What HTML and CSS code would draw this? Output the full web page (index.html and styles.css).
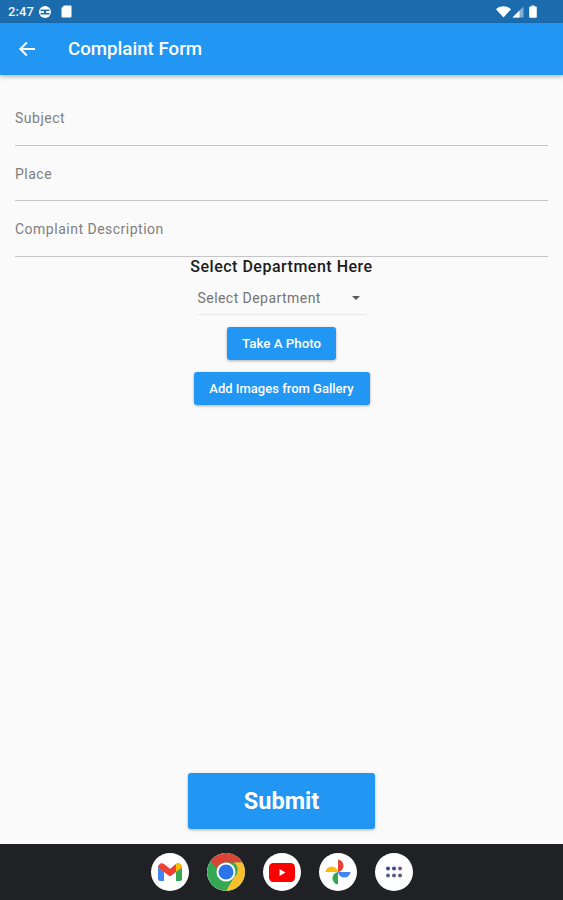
FILE: index.html
```html
<!DOCTYPE html>
<html lang="en">
<head>
<meta charset="utf-8">
<title>Complaint Form</title>
<link rel="stylesheet" href="styles.css">
</head>
<body>
<div class="screen">
  <header class="status">
    <div class="status-left">
      <span class="time">2:47</span>
      <svg class="ic" width="14" height="14" viewBox="0 0 14 14"><circle cx="7" cy="7" r="6" fill="#fff"/><rect x="2.500" y="4.600" width="9" height="1.500" fill="#1a6cad"/><rect x="2.500" y="8" width="9" height="1.500" fill="#1a6cad"/><circle cx="7" cy="7" r="1.200" fill="#1a6cad"/></svg>
      <svg class="ic sd" width="11" height="13" viewBox="0 0 11 13"><path d="M3 .5H9.500a1 1 0 0 1 1 1V11.500a1 1 0 0 1-1 1H1.500a1 1 0 0 1-1-1V3z" fill="#fff"/></svg>
    </div>
    <div class="status-right">
      <svg width="15" height="12" viewBox="0 0 15 12"><path d="M0 3.200C4.200-.6 10.800-.6 15 3.200L7.500 11.500z" fill="#fff"/></svg>
      <svg width="12" height="12" viewBox="0 0 12 12"><path d="M11.500.5V11.500H.5z" fill="#fff" fill-opacity=".45"/><path d="M7.500 4.500V11.500H.5z" fill="#fff"/></svg>
      <svg class="batt" width="8" height="13" viewBox="0 0 8 13"><path d="M2.500.5h3v1h1.500a.8.8 0 0 1 .8.800V12a.8.8 0 0 1-.8.800H1a.8.8 0 0 1-.8-.8V2.300a.8.8 0 0 1 .8-.800h1.500z" fill="#fff"/></svg>
    </div>
  </header>
  <div class="appbar">
    <svg class="back" width="18" height="16" viewBox="0 0 18 16"><path d="M17 8H2.500M8.800 1.500 2.300 8l6.500 6.500" fill="none" stroke="#fff" stroke-width="2"/></svg>
    <h1 class="title">Complaint Form</h1>
  </div>
  <main class="content">
    <div class="fields">
      <div class="field">Subject</div>
      <div class="field">Place</div>
      <div class="field">Complaint Description</div>
    </div>
    <div class="department">
      <h2 class="dept-title">Select Department Here</h2>
      <div class="dropdown">
        <span>Select Department</span>
        <span class="caret"></span>
      </div>
      <button class="btn btn-photo">Take A Photo</button>
      <button class="btn btn-gallery">Add Images from Gallery</button>
    </div>
    <div class="submit-row">
      <button class="btn btn-submit">Submit</button>
    </div>
  </main>
  <nav class="dock">
    <div class="app">
      <svg width="26" height="20" viewBox="0 0 26 20"><path d="M1 5.500V17a2 2 0 0 0 2 2h4V9z" fill="#4285f4"/><path d="M19 9v10h4a2 2 0 0 0 2-2V5.500z" fill="#34a853"/><path d="M1 5.500C1 2 4.500.2 7 2l6 4.800L19 2c2.500-1.800 6 0 6 3.500L13 14.500z" fill="#ea4335"/><path d="M19 2c2.500-1.800 6 0 6 3.500L19 10z" fill="#fbbc04"/></svg>
    </div>
    <div class="app">
      <svg width="38" height="38" viewBox="0 0 38 38"><circle cx="19" cy="19" r="19" fill="#34a853"/><path d="M19 0a19 19 0 0 1 16.500 9.500H19a9.500 9.500 0 0 0-9 6.500L3.500 8A19 19 0 0 1 19 0z" fill="#db4437"/><path d="M35.500 9.500A19 19 0 0 1 19 38l8-13.500a9.500 9.500 0 0 0 0-15z" fill="#fbc02d"/><circle cx="19" cy="19" r="9.500" fill="#fff"/><circle cx="19" cy="19" r="7.500" fill="#2a75e8"/></svg>
    </div>
    <div class="app">
      <svg width="26" height="19" viewBox="0 0 26 19"><rect width="26" height="19" rx="4.500" fill="#f00"/><path d="M10.500 6v7l6-3.500z" fill="#fff"/></svg>
    </div>
    <div class="app">
      <svg width="28" height="28" viewBox="0 0 28 28"><path d="M14 14V1.500a6.300 6.300 0 0 1 0 12.500z" fill="#ea4335"/><path d="M14 14h12.500a6.300 6.300 0 0 1-12.500 0z" fill="#4285f4"/><path d="M14 14v12.500a6.300 6.300 0 0 1 0-12.500z" fill="#34a853"/><path d="M14 14H1.500a6.300 6.300 0 0 1 12.500 0z" fill="#fbbc04"/></svg>
    </div>
    <div class="app">
      <svg width="18" height="12" viewBox="0 0 18 12"><g fill="#3c4a8c"><circle cx="3" cy="2.500" r="2"/><circle cx="9" cy="2.500" r="2"/><circle cx="15" cy="2.500" r="2" fill="#7a5a8a"/></g><g fill="#5a5f80"><circle cx="3" cy="9.500" r="2"/><circle cx="9" cy="9.500" r="2"/><circle cx="15" cy="9.500" r="2"/></g></svg>
    </div>
  </nav>
</div>
</body>
</html>
```
FILE: styles.css
```css
* { box-sizing: border-box; }
html, body { margin: 0; padding: 0; }
body { font-family: Roboto, "Liberation Sans", sans-serif; background: #fafafa; }
.screen { width: 563px; height: 900px; display: flex; flex-direction: column; overflow: hidden; }

.status { height: 23px; flex: none; background: #1a6cad; display: flex; justify-content: space-between; align-items: center; padding: 0 26px 0 8px; color: #fff; }
.status-left { display: flex; align-items: center; gap: 4px; }
.status-right { display: flex; align-items: center; gap: 1px; }
.time { font-size: 13px; font-weight: 500; letter-spacing: .1px; color: #eef4fa; }
.ic { display: block; }
.sd { margin-left: 5px; }
.batt { margin-left: 4px; }

.appbar { height: 52px; flex: none; background: #2196f3; display: flex; align-items: center; padding: 0 0 0 18px; box-shadow: 0 2px 4px rgba(0,0,0,.25); position: relative; }
.back { display: block; margin-bottom: 1px; }
.title { margin: 0 0 0 32px; font-size: 18.700px; font-weight: 500; color: #fff; }

.content { flex: 1; display: flex; flex-direction: column; padding: 15px; }
.field { height: 55.500px; border-bottom: 1.500px solid #c6c6c6; display: flex; align-items: center; padding-top: 2px; font-size: 14px; letter-spacing: .5px; color: #7f7f7f; }

.department { display: flex; flex-direction: column; align-items: center; }
.dept-title { margin: 0; height: 19px; line-height: 19px; font-size: 16px; font-weight: 500; color: #1c1c1c; letter-spacing: .5px; }
.dropdown { width: 168px; height: 39px; display: flex; justify-content: space-between; align-items: center; border-bottom: 1px solid #e8e8e8; padding: 6px 6px 0 0; font-size: 14px; letter-spacing: .45px; color: #757575; }
.caret { width: 0; height: 0; border-left: 4.500px solid transparent; border-right: 4.500px solid transparent; border-top: 4.500px solid #5a5a5a; }

.btn { border: 0; border-radius: 3px; background: #2196f3; color: #fff; font-family: inherit; font-weight: 500; box-shadow: 0 1px 3px rgba(0,0,0,.3); padding: 0; }
.btn-photo { width: 109px; height: 33px; margin-top: 12px; font-size: 13.300px; }
.btn-gallery { width: 176px; height: 33px; margin-top: 12px; font-size: 13px; }

.submit-row { margin-top: auto; display: flex; justify-content: center; }
.btn-submit { width: 187px; height: 56px; font-size: 23.500px; font-weight: 700; }

.dock { height: 56px; flex: none; background: #202124; display: flex; justify-content: center; align-items: center; gap: 18px; }
.app { width: 38px; height: 38px; border-radius: 50%; background: #fff; display: flex; align-items: center; justify-content: center; overflow: hidden; }
```
